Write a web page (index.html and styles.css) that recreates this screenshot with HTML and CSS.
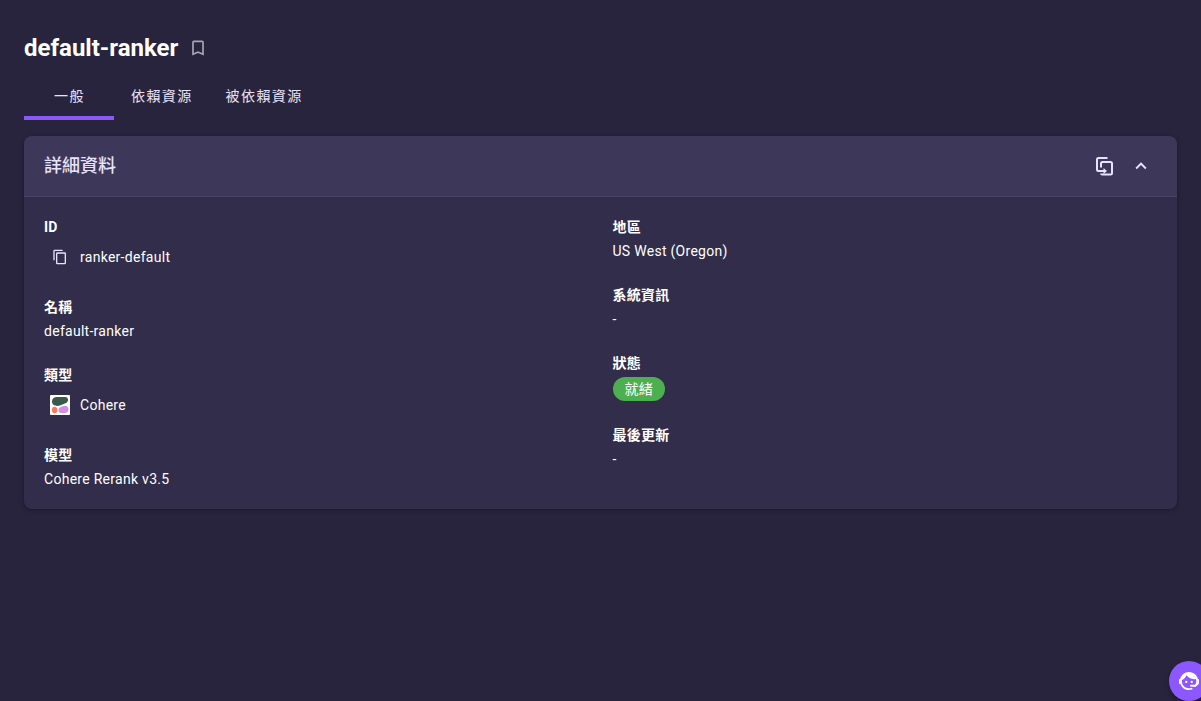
FILE: index.html
```html
<!DOCTYPE html>
<html lang="zh-Hant">
<head>
    <meta charset="UTF-8">
    <meta name="viewport" content="width=device-width, initial-scale=1.0">
    <title>default-ranker</title>
    <link rel="stylesheet" href="styles.css">
</head>
<body>
    <main class="page">
        <header class="page-header">
            <h1>default-ranker</h1>
            <button class="icon-btn bookmark-btn" type="button" aria-label="書籤">
                <svg width="20" height="20" viewBox="0 0 24 24"><path d="M17 18l-5-2.18L7 18V5h10m0-2H7a2 2 0 0 0-2 2v16l7-3 7 3V5a2 2 0 0 0-2-2z"/></svg>
            </button>
        </header>

        <nav class="tabs" role="tablist">
            <button class="tab active" type="button" role="tab" aria-selected="true">一般</button>
            <button class="tab" type="button" role="tab" aria-selected="false">依賴資源</button>
            <button class="tab" type="button" role="tab" aria-selected="false">被依賴資源</button>
        </nav>

        <section class="card">
            <div class="card-header">
                <h2>詳細資料</h2>
                <div class="card-actions">
                    <button class="icon-btn" type="button" aria-label="複製詳細資料">
                        <svg width="20" height="20" viewBox="0 -1 20 20" class="line-icon">
                            <path d="M12.500 1H3.500Q2 1 2 2.500V12.500Q2 14 3.500 14H10"/>
                            <path d="M8.500 11L12 14L8.500 17" class="arrow"/>
                            <path d="M6 10.500V6.500Q6 5 7.500 5H15.500Q17 5 17 6.500V16Q17 17.500 15.500 17.500H7.500Q6 17.500 6 16.500"/>
                        </svg>
                    </button>
                    <button class="icon-btn" type="button" aria-label="收合" aria-expanded="true">
                        <svg width="22" height="22" viewBox="0 0 24 24"><path d="M7.41 15.41L12 10.830l4.590 4.580L18 14l-6-6-6 6z"/></svg>
                    </button>
                </div>
            </div>

            <div class="card-body">
                <dl class="details">
                    <div class="field">
                        <dt>ID</dt>
                        <dd class="with-icon">
                            <button class="icon-btn copy-btn" type="button" aria-label="複製 ID">
                                <svg width="16" height="16" viewBox="0 0 24 24"><path d="M19 21H8V7h11m0-2H8a2 2 0 0 0-2 2v14a2 2 0 0 0 2 2h11a2 2 0 0 0 2-2V7a2 2 0 0 0-2-2m-3-4H4a2 2 0 0 0-2 2v14h2V3h12z"/></svg>
                            </button>
                            <span>ranker-default</span>
                        </dd>
                    </div>
                    <div class="field">
                        <dt>名稱</dt>
                        <dd>default-ranker</dd>
                    </div>
                    <div class="field">
                        <dt>類型</dt>
                        <dd class="with-icon">
                            <span class="provider-logo">
                                <svg width="20" height="20" viewBox="0 0 20 20">
                                    <rect width="20" height="20" rx="1" fill="#fff"/>
                                    <path d="M7 2H15C19 2 19 7 15.500 8.300L10 10.500C7 11.400 2 11 2 6.500C2 3.500 4 2 7 2Z" fill="#39594d"/>
                                    <path d="M2 14.500C2 10.800 7.300 10.800 7.300 14.500V15.500C7.300 19 2 19 2 15.500Z" fill="#ff7759"/>
                                    <path d="M8.500 15C8.500 13 10 12 12 11.400L14 10.900C16.500 10.300 18.500 12 18.500 14.200C18.500 16.500 17 18 14.500 18H11.500C9.500 18 8.500 16.800 8.500 15Z" fill="#d18ee2"/>
                                </svg>
                            </span>
                            <span>Cohere</span>
                        </dd>
                    </div>
                    <div class="field">
                        <dt>模型</dt>
                        <dd>Cohere Rerank v3.5</dd>
                    </div>
                </dl>

                <dl class="details">
                    <div class="field">
                        <dt>地區</dt>
                        <dd>US West (Oregon)</dd>
                    </div>
                    <div class="field">
                        <dt>系統資訊</dt>
                        <dd>-</dd>
                    </div>
                    <div class="field">
                        <dt>狀態</dt>
                        <dd class="status"><span class="chip">就緒</span></dd>
                    </div>
                    <div class="field">
                        <dt>最後更新</dt>
                        <dd>-</dd>
                    </div>
                </dl>
            </div>
        </section>
    </main>

    <button class="assistant-btn" type="button" aria-label="助理">
        <svg width="24" height="24" viewBox="0 0 24 24"><path d="M18.720 14.760C19.070 13.910 19.260 13 19.260 12C19.260 11.280 19.150 10.590 18.960 9.950C18.310 10.100 17.630 10.180 16.920 10.180C13.860 10.180 11.150 8.670 9.500 6.340C8.610 8.500 6.910 10.260 4.770 11.220C4.730 11.470 4.730 11.740 4.730 12A7.270 7.270 0 0 0 12 19.270C13.050 19.270 14.060 19.040 14.970 18.630C15.540 19.720 15.800 20.260 15.780 20.260C14.140 20.810 12.870 21.080 12 21.080C9.580 21.080 7.270 20.130 5.570 18.420C4.530 17.380 3.760 16.110 3.330 14.730H2V10.180H3.090C3.930 6.040 7.600 2.920 12 2.920C14.400 2.920 16.710 3.870 18.420 5.570C19.690 6.840 20.540 8.450 20.890 10.180H22V14.670H22V14.730L18.380 18L13.080 17.400V15.730H17.910L18.720 14.760M9.270 11.770C9.570 11.770 9.860 11.890 10.070 12.110C10.280 12.320 10.400 12.610 10.400 12.910C10.400 13.210 10.280 13.500 10.070 13.710C9.860 13.920 9.570 14.040 9.270 14.040C8.640 14.040 8.130 13.540 8.130 12.910C8.130 12.280 8.640 11.770 9.270 11.770M14.720 11.770C15.350 11.770 15.850 12.280 15.850 12.910C15.850 13.540 15.350 14.040 14.720 14.040C14.090 14.040 13.580 13.540 13.580 12.910A1.140 1.140 0 0 1 14.720 11.770Z"/></svg>
    </button>
</body>
</html>
```
FILE: styles.css
```css
* {
    box-sizing: border-box;
}
body {
    margin: 0;
    min-height: 100vh;
    background-color: #28243d;
    color: #fff;
    font-family: Roboto, "Noto Sans CJK TC", sans-serif;
    font-size: 14px;
    line-height: 24px;
    letter-spacing: 0.02em;
}
button {
    padding: 0;
    border: 0;
    background: none;
    color: inherit;
    font: inherit;
    cursor: pointer;
}
svg {
    display: block;
    fill: currentColor;
}
h1, h2, dl, dd {
    margin: 0;
}
.page {
    padding: 24px;
}

/* Title and tabs */
.page-header {
    display: flex;
    align-items: center;
    gap: 2px;
    height: 48px;
}
h1 {
    font-size: 24px;
    font-weight: 700;
    line-height: 32px;
    letter-spacing: normal;
}
.icon-btn {
    display: flex;
    align-items: center;
    justify-content: center;
    width: 36px;
    height: 36px;
    color: #e7e3fc;
}
.bookmark-btn {
    color: #a9a6b8;
}
.tabs {
    display: flex;
    height: 48px;
    margin-bottom: 16px;
}
.tab {
    min-width: 90px;
    padding: 0 16px 0 17px;
    border-top: 4px solid transparent;
    border-bottom: 4px solid transparent;
    color: #e7e3fc;
    font-weight: 400;
    letter-spacing: 0.1em;
}
.tab.active {
    border-bottom-color: #8c57ff;
}

/* Details card */
.card {
    border-radius: 8px;
    background-color: #322d4a;
    box-shadow: 0 1px 4px rgba(0, 0, 0, 0.35);
    overflow: hidden;
}
.card-header {
    display: flex;
    align-items: center;
    justify-content: space-between;
    height: 61px;
    padding: 0 18px 0 20px;
    border-bottom: 1px solid #4b4564;
    background-color: #3d3759;
}
h2 {
    color: #e7e3fc;
    font-size: 18px;
    font-weight: 500;
    letter-spacing: normal;
}
.card-actions {
    display: flex;
}
.line-icon {
    fill: none;
    stroke: currentColor;
    stroke-width: 2;
}
.line-icon .arrow {
    fill: currentColor;
    stroke: none;
}
.card-body {
    display: grid;
    grid-template-columns: 1fr 1fr;
    gap: 24px;
    padding: 18px 20px;
}
.details {
    display: flex;
    flex-direction: column;
    gap: 20px;
}
dt {
    font-weight: 700;
}
.with-icon {
    display: flex;
    align-items: center;
    height: 36px;
}
.copy-btn, .provider-logo {
    width: 36px;
    flex: none;
}
.copy-btn {
    padding-right: 4px;
}
.provider-logo {
    padding-left: 6px;
}
.status {
    padding: 2px 0;
}
.chip {
    display: block;
    width: fit-content;
    padding: 0 12px;
    border-radius: 12px;
    background-color: #4caf50;
}

/* Assistant button, partly past the window edge */
.assistant-btn {
    position: fixed;
    right: -8px;
    bottom: 0;
    display: flex;
    align-items: center;
    justify-content: center;
    width: 40px;
    height: 40px;
    border-radius: 50%;
    background-color: #8c57ff;
    color: #fff;
    box-shadow: 0 3px 6px rgba(0, 0, 0, 0.3);
}
```
